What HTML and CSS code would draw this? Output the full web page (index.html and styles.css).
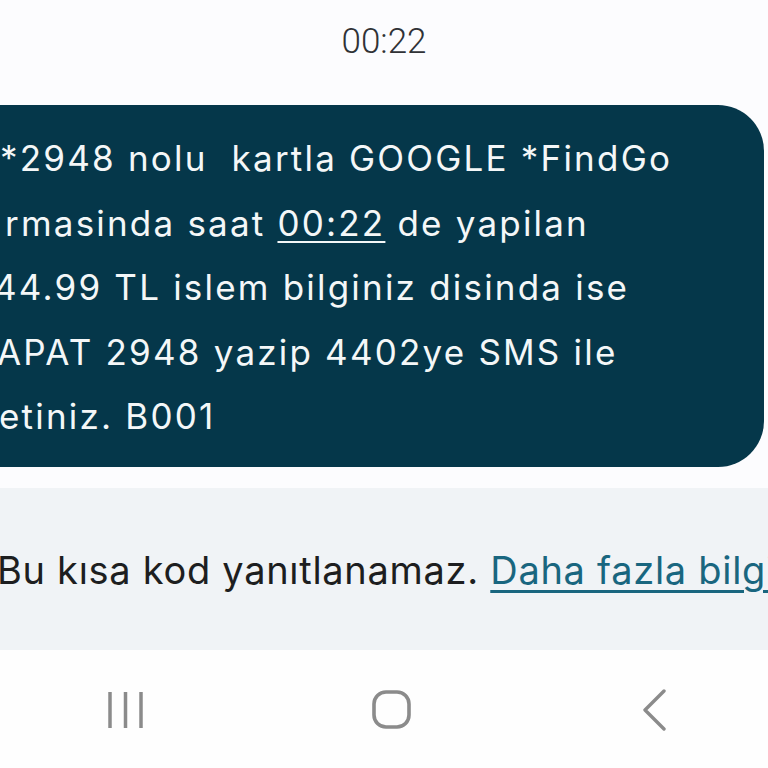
FILE: index.html
```html
<!DOCTYPE html>
<html lang="tr">
<head>
<meta charset="utf-8">
<title>Mesaj</title>
<link rel="stylesheet" href="styles.css">
</head>
<body>
<div class="screen">
  <header class="time">00:22</header>
  <div class="thread">
    <div class="bubble">
      <div class="line l1">*2948 nolu&nbsp; kartla GOOGLE *FindGo</div>
      <div class="line l2">rmasinda saat <span class="u">00:22</span> de yapilan</div>
      <div class="line l3">44.99 TL islem bilginiz disinda ise</div>
      <div class="line l4">APAT 2948 yazip 4402ye SMS ile</div>
      <div class="line l5">etiniz. B001</div>
    </div>
  </div>
  <div class="notice">
    <p class="notice-text">Bu kısa kod yanıtlanamaz. <a class="link" href="#">Daha fazla bilgi</a></p>
  </div>
  <nav class="navbar">
    <span class="nav-btn recents">
      <svg width="40" height="40" viewBox="0 0 40 40"><g stroke="#8b8b8b" stroke-width="3.5"><line x1="4" y1="2" x2="4" y2="38"/><line x1="19.5" y1="2" x2="19.5" y2="38"/><line x1="35" y1="2" x2="35" y2="38"/></g></svg>
    </span>
    <span class="nav-btn home">
      <svg width="40" height="40" viewBox="0 0 40 40"><rect x="2" y="2" width="35" height="35" rx="12" fill="none" stroke="#8b8b8b" stroke-width="3.6"/></svg>
    </span>
    <span class="nav-btn back">
      <svg width="40" height="42" viewBox="0 0 40 42"><polyline points="29,2 10,21 29,40" fill="none" stroke="#8b8b8b" stroke-width="3.4" stroke-linecap="round" stroke-linejoin="round"/></svg>
    </span>
  </nav>
</div>
</body>
</html>
```

FILE: styles.css
```css
* { box-sizing: border-box; }
html, body { margin: 0; padding: 0; }
body {
  width: 768px;
  height: 768px;
  overflow: hidden;
  background: #fcfcfe;
  font-family: Inter, Roboto, "Noto Sans", sans-serif;
}
.screen {
  display: flex;
  flex-direction: column;
  height: 768px;
}
.time {
  height: 105px;
  padding-top: 21px;
  text-align: center;
  font-family: Roboto, sans-serif;
  font-size: 35px;
  font-weight: 300;
  color: #303236;
  line-height: 42px;
}
.thread {
  display: flex;
  justify-content: flex-end;
  padding-right: 4px;
}
.bubble {
  width: 820px;
  margin-left: -60px;
  height: 362px;
  background: #05374a;
  border-radius: 46px;
  padding: 21px 0 0 60px;
  color: #f4f7f8;
  font-size: 35px;
  line-height: 64.5px;
  letter-spacing: 2.2px;
  white-space: nowrap;
}
.line.l1 { text-indent: -4px; }
.line.l2 { text-indent: 1px; }
.line.l3 { text-indent: -10px; }
.line.l4 { text-indent: -7px; }
.line.l5 { text-indent: -5px; }
.u {
  text-decoration: underline;
  text-decoration-thickness: 2px;
  text-underline-offset: 5px;
}
.notice {
  margin-top: 21px;
  height: 162px;
  background: #f0f3f6;
  display: flex;
  align-items: center;
}
.notice-text {
  margin: 0;
  white-space: nowrap;
  font-size: 38px;
  letter-spacing: 0.7px;
  color: #1d1e20;
  text-indent: -3px;
  padding-top: 2px;
}
.link {
  color: #19667f;
  text-decoration: underline;
  text-decoration-thickness: 3px;
  text-underline-offset: 6px;
}
.navbar {
  flex: 1;
  background: #fefefe;
  display: flex;
  align-items: center;
  padding: 2px 0 0 106px;
}
.nav-btn {
  display: flex;
  flex-shrink: 0;
  width: 40px;
  justify-content: center;
  align-items: center;
}
.home { margin-left: 226px; }
.back { margin-left: 223px; }
```
